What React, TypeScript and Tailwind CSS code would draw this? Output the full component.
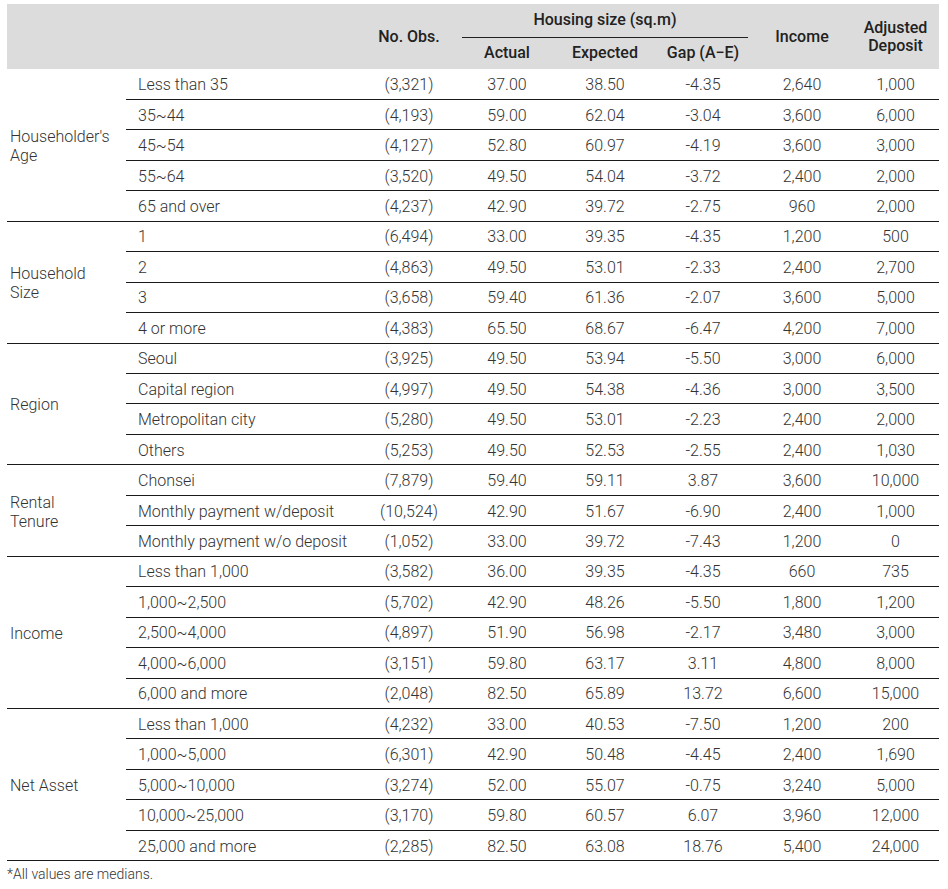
import React from "react";

type Row = [string, string, string, string, string, string, string];
type Group = { label: string[]; rows: Row[] };

const groups: Group[] = [
  {
    label: ["Householder's", "Age"],
    rows: [
      ["Less than 35", "(3,321)", "37.00", "38.50", "-4.35", "2,640", "1,000"],
      ["35~44", "(4,193)", "59.00", "62.04", "-3.04", "3,600", "6,000"],
      ["45~54", "(4,127)", "52.80", "60.97", "-4.19", "3,600", "3,000"],
      ["55~64", "(3,520)", "49.50", "54.04", "-3.72", "2,400", "2,000"],
      ["65 and over", "(4,237)", "42.90", "39.72", "-2.75", "960", "2,000"],
    ],
  },
  {
    label: ["Household", "Size"],
    rows: [
      ["1", "(6,494)", "33.00", "39.35", "-4.35", "1,200", "500"],
      ["2", "(4,863)", "49.50", "53.01", "-2.33", "2,400", "2,700"],
      ["3", "(3,658)", "59.40", "61.36", "-2.07", "3,600", "5,000"],
      ["4 or more", "(4,383)", "65.50", "68.67", "-6.47", "4,200", "7,000"],
    ],
  },
  {
    label: ["Region"],
    rows: [
      ["Seoul", "(3,925)", "49.50", "53.94", "-5.50", "3,000", "6,000"],
      ["Capital region", "(4,997)", "49.50", "54.38", "-4.36", "3,000", "3,500"],
      ["Metropolitan city", "(5,280)", "49.50", "53.01", "-2.23", "2,400", "2,000"],
      ["Others", "(5,253)", "49.50", "52.53", "-2.55", "2,400", "1,030"],
    ],
  },
  {
    label: ["Rental", "Tenure"],
    rows: [
      ["Chonsei", "(7,879)", "59.40", "59.11", "3.87", "3,600", "10,000"],
      ["Monthly payment w/deposit", "(10,524)", "42.90", "51.67", "-6.90", "2,400", "1,000"],
      ["Monthly payment w/o deposit", "(1,052)", "33.00", "39.72", "-7.43", "1,200", "0"],
    ],
  },
  {
    label: ["Income"],
    rows: [
      ["Less than 1,000", "(3,582)", "36.00", "39.35", "-4.35", "660", "735"],
      ["1,000~2,500", "(5,702)", "42.90", "48.26", "-5.50", "1,800", "1,200"],
      ["2,500~4,000", "(4,897)", "51.90", "56.98", "-2.17", "3,480", "3,000"],
      ["4,000~6,000", "(3,151)", "59.80", "63.17", "3.11", "4,800", "8,000"],
      ["6,000 and more", "(2,048)", "82.50", "65.89", "13.72", "6,600", "15,000"],
    ],
  },
  {
    label: ["Net Asset"],
    rows: [
      ["Less than 1,000", "(4,232)", "33.00", "40.53", "-7.50", "1,200", "200"],
      ["1,000~5,000", "(6,301)", "42.90", "50.48", "-4.45", "2,400", "1,690"],
      ["5,000~10,000", "(3,274)", "52.00", "55.07", "-0.75", "3,240", "5,000"],
      ["10,000~25,000", "(3,170)", "59.80", "60.57", "6.07", "3,960", "12,000"],
      ["25,000 and more", "(2,285)", "82.50", "63.08", "18.76", "5,400", "24,000"],
    ],
  },
];

export default function App() {
  return (
    <div
      className="w-[948px] h-[889px] bg-white pt-[4px] pl-[7px] text-[#333333]"
      style={{ fontFamily: "Roboto, 'Liberation Sans', sans-serif" }}
    >
      <table className="w-[932px] border-collapse table-fixed">
        <colgroup>
          <col className="w-[119px]" />
          <col className="w-[234px]" />
          <col className="w-[98px]" />
          <col className="w-[98px]" />
          <col className="w-[98px]" />
          <col className="w-[98px]" />
          <col className="w-[100px]" />
          <col className="w-[87px]" />
        </colgroup>
        <thead className="bg-[#dcdcdc] text-[16px] text-[#222222]">
          <tr className="h-[36px]">
            <th rowSpan={2}></th>
            <th rowSpan={2}></th>
            <th rowSpan={2} className="align-middle pt-[1px] font-medium">
              No. Obs.
            </th>
            <th colSpan={3} className="p-0 align-bottom pb-[2px] font-medium">
              <div className="mx-[4px] border-b border-[#222222] pb-[8px] leading-[18px]">
                Housing size (sq.m)
              </div>
            </th>
            <th rowSpan={2} className="align-middle pt-[1px] font-medium">
              Income
            </th>
            <th rowSpan={2} className="align-middle leading-[18px] pt-[1px] font-medium">
              Adjusted
              <br />
              Deposit
            </th>
          </tr>
          <tr className="h-[29px]">
            <th className="align-top pt-[4px] leading-[18px] font-medium">Actual</th>
            <th className="align-top pt-[4px] leading-[18px] font-medium">Expected</th>
            <th className="align-top pt-[4px] leading-[18px] font-medium">Gap (A−E)</th>
          </tr>
        </thead>
        <tbody className="text-[16px] font-light">
          {groups.map((g, gi) =>
            g.rows.map((r, ri) => (
              <tr key={gi + "-" + ri} className="h-[30.46px]">
                {ri === 0 && (
                  <td
                    rowSpan={g.rows.length}
                    className="border-b border-[#1a1a1a] pl-[3px] align-middle leading-[19px] pt-[2px]"
                  >
                    {g.label.map((l, li) => (
                      <div key={li}>{l}</div>
                    ))}
                  </td>
                )}
                <td className="border-b border-[#1a1a1a] pl-[12px] pt-[2px] leading-[20px] whitespace-nowrap">
                  {r[0]}
                </td>
                {r.slice(1).map((v, vi) => (
                  <td
                    key={vi}
                    className="border-b border-[#1a1a1a] pt-[2px] text-center leading-[20px]"
                  >
                    {v}
                  </td>
                ))}
              </tr>
            ))
          )}
        </tbody>
      </table>
      <div className="mt-[4px] text-[14px] font-light leading-[18px]">*All values are medians.</div>
    </div>
  );
}
